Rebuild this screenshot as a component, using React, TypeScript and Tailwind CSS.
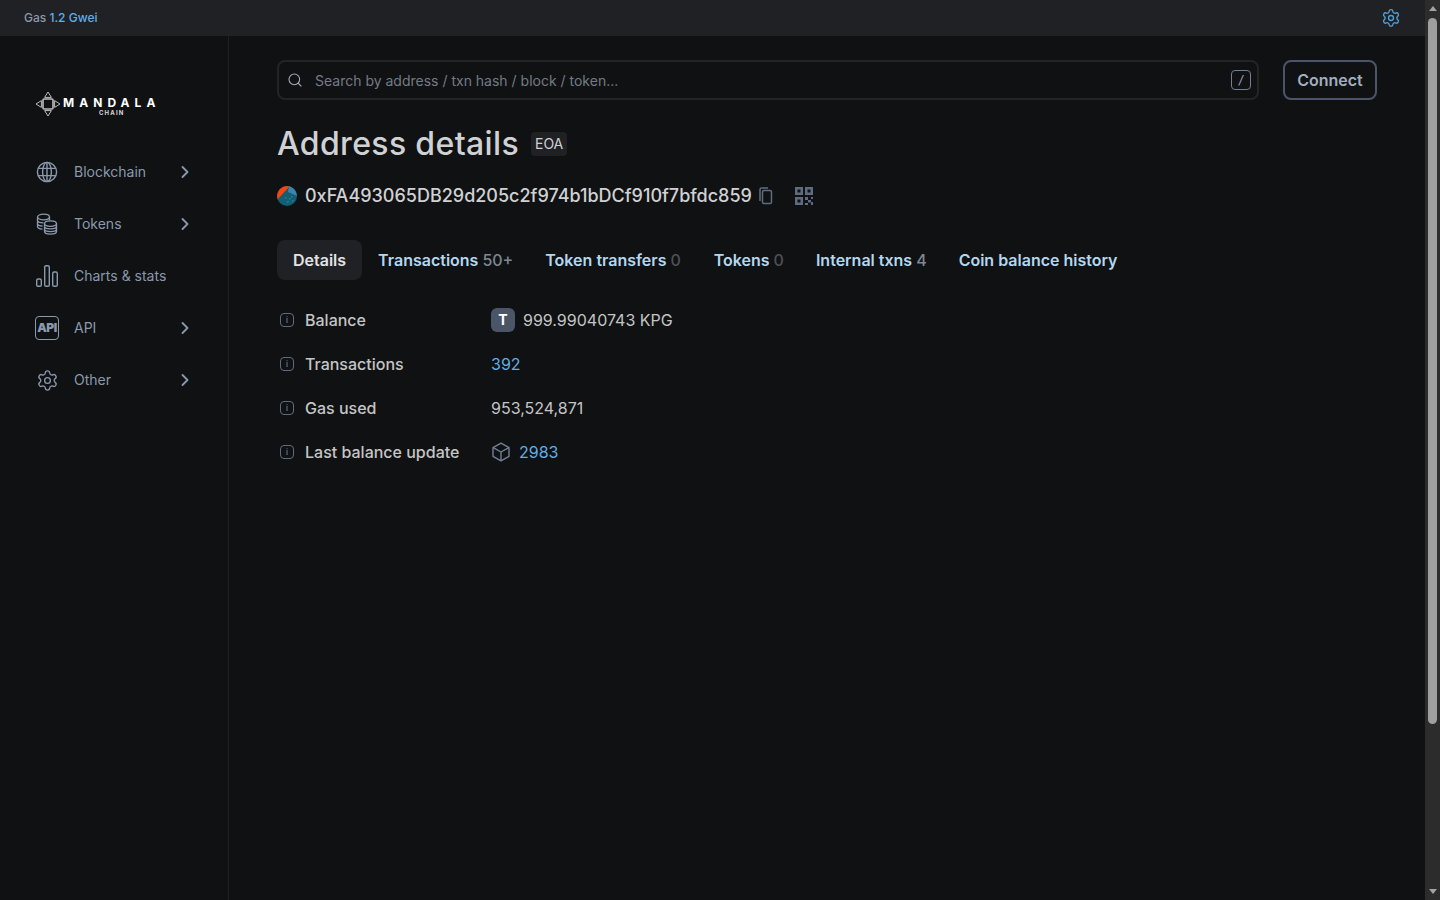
import { ChevronRight, Search, Settings } from "lucide-react";
import type { ReactNode } from "react";

function GlobeIcon() {
  return (
    <svg width="22" height="22" viewBox="0 0 22 22" fill="none" stroke="currentColor" strokeWidth="1.4">
      <circle cx="11" cy="11" r="9.6" />
      <ellipse cx="11" cy="11" rx="4.4" ry="9.6" />
      <path d="M11 1.400v19.200M2.200 7.400h17.600M2.200 14.600h17.600" />
    </svg>
  );
}

function CoinsIcon() {
  return (
    <svg width="22" height="22" viewBox="0 0 22 22" fill="none" stroke="currentColor" strokeWidth="1.3">
      <ellipse cx="7.500" cy="4" rx="6" ry="2.800" />
      <path d="M1.500 4v9.600c0 1.300 2 2.400 5 2.600M1.500 7.200c0 1.400 2.700 2.600 6 2.600M1.500 10.400c0 1.400 2 2.400 5 2.600M13.500 4v3.600" />
      <ellipse cx="14.500" cy="10.600" rx="6" ry="2.800" />
      <path d="M8.500 10.600v8c0 1.400 2.700 2.600 6 2.600s6-1.200 6-2.600v-8M8.500 13.300c0 1.400 2.700 2.600 6 2.600s6-1.200 6-2.600M8.500 16c0 1.400 2.700 2.600 6 2.600s6-1.200 6-2.600" />
    </svg>
  );
}

function ChartIcon() {
  return (
    <svg width="22" height="22" viewBox="0 0 22 22" fill="none" stroke="currentColor" strokeWidth="1.4">
      <rect x="0.7" y="14" width="4.6" height="7.3" rx="1.4" />
      <rect x="8.7" y="0.7" width="4.6" height="20.6" rx="1.4" />
      <rect x="16.7" y="7" width="4.6" height="14.3" rx="1.4" />
    </svg>
  );
}

function ApiIcon() {
  return (
    <div className="flex h-6 w-6 items-center justify-center rounded-[4px] border border-[#8a99ad] text-[12px] font-black tracking-[-0.5px] leading-none">
      API
    </div>
  );
}

function NavItem({ icon, label, arrow = true }: { icon: ReactNode; label: string; arrow?: boolean }) {
  return (
    <div className="flex h-[52px] items-center text-[#8a99ad]">
      <div className="flex w-6 justify-center">{icon}</div>
      <span className="ml-[15px] w-[99px] text-sm leading-5 whitespace-nowrap">{label}</span>
      {arrow && <ChevronRight size={20} strokeWidth={2.2} className="ml-[2px] text-[#8a99ad]" />}
    </div>
  );
}

function Logo() {
  return (
    <div className="flex items-center">
      <svg width="26" height="26" viewBox="0 0 26 26" fill="none" stroke="#bdbdbd" strokeWidth="1">
        <path d="M13 1l3.400 5.400H9.600L13 1zM13 25l3.400-5.400H9.600L13 25zM1 13l5.400-3.400v6.800L1 13zM25 13l-5.400-3.400v6.800L25 13z" />
        <rect x="8" y="8" width="10" height="10" rx="1" strokeWidth="1.600" />
      </svg>
      <div className="ml-[2px] flex flex-col items-center pt-[5px]">
        <span className="text-[12px] font-bold leading-[12px] tracking-[0.42em] whitespace-nowrap text-white">MANDALA</span>
        <span className="text-[6px] font-bold leading-[8px] tracking-[0.2em] text-[#d8d8d8]">CHAIN</span>
      </div>
    </div>
  );
}

function InfoIcon() {
  return (
    <div className="flex h-3.5 w-3.5 items-center justify-center rounded-[4px] border border-[#5f6c80] text-[8px] leading-none text-[#8a99ad]">
      i
    </div>
  );
}

function Row({ label, children }: { label: string; children: ReactNode }) {
  return (
    <div className="flex h-11 items-center">
      <div className="flex w-[18px] justify-center pl-[2px]">
        <InfoIcon />
      </div>
      <span className="ml-[10px] w-[186px] text-base font-medium whitespace-nowrap text-[#c4c5c6]">{label}</span>
      <div className="flex items-center text-base text-[#c4c5c6]">{children}</div>
    </div>
  );
}

function Tab({ label, count, dim, active, shifted }: { label: string; count?: string; dim?: boolean; active?: boolean; shifted?: boolean }) {
  return (
    <div
      className={`flex h-10 items-center rounded-lg px-4 text-base font-semibold whitespace-nowrap ${
        active ? "bg-[#202124] text-[#e3e4e5]" : "text-[#b3d7ef]"
      } ${shifted ? "ml-[1px]" : ""}`}
    >
      {label}
      {count && <span className={`ml-1 font-medium ${dim ? "text-[#4e5156]" : "text-[#7d8794]"}`}>{count}</span>}
    </div>
  );
}

function CopyIcon() {
  return (
    <svg width="14" height="18" viewBox="0 0 14 18" fill="none" stroke="#5f6c80" strokeWidth="1.5" className="ml-[7px]">
      <path d="M1 14V2.500A1.500 1.500 0 0 1 2.500 1H9" />
      <rect x="3.500" y="3.500" width="9" height="13" rx="1.500" />
    </svg>
  );
}

function QrIcon() {
  return (
    <svg width="20" height="20" viewBox="0 0 20 20" fill="none" className="ml-[21px] text-[#5f6c80]">
      <path
        fill="currentColor"
        fillRule="evenodd"
        d="M1 1h8v8H1V1zm2.500 2.500v3h3v-3h-3zM11 1h8v8h-8V1zm2.500 2.500v3h3v-3h-3zM1 11h8v8H1v-8zm2.500 2.500v3h3v-3h-3zM11 11h3v3h-3v-3zM17 11h2v2h-2v-2zM14 14h3v2.500h-3V14zM11 17h3v2h-3v-2zM17 16h2v3h-2v-3z"
      />
    </svg>
  );
}

function Avatar() {
  return (
    <div className="h-5 w-5 overflow-hidden rounded-full">
      <svg width="20" height="20" viewBox="0 0 20 20">
        <path d="M0 0h20v20H0z" fill="#125e72" />
        <path d="M12 0l-1 6 9 4V0z" fill="#3f83ad" />
        <path d="M0 14L13 0H0z" fill="#f4460d" />
        <path d="M8 11h1.500v1.500H8zM12 12h1.500v1.500H12zM15 14h1.500v1.500H15zM10 15h1.500v1.500H10zM14 10h1.500v1.500H14z" fill="#2a7f96" />
      </svg>
    </div>
  );
}

function Scrollbar() {
  return (
    <div className="flex w-[15px] shrink-0 flex-col items-center bg-[#2c2c2c]">
      <div className="mt-[6px] h-0 w-0 border-x-[4px] border-b-[5px] border-x-transparent border-b-[#a3a3a3]" />
      <div className="mt-[7px] h-[706px] w-[9px] rounded-full bg-[#9f9f9f]" />
      <div className="mt-auto mb-[6px] h-0 w-0 border-x-[4px] border-t-[5px] border-x-transparent border-t-[#a3a3a3]" />
    </div>
  );
}

export default function App() {
  return (
    <div className="flex h-[900px] w-full overflow-hidden bg-[#101112] font-['Inter',sans-serif]">
      <div className="flex min-w-0 flex-1 flex-col">
        {/* Top bar */}
        <div className="flex h-9 shrink-0 items-center justify-between bg-[#202124] px-6">
          <div className="text-xs font-medium text-[#8a99ad]">
            Gas <span className="text-[#63aee6]">1.2 Gwei</span>
          </div>
          <Settings size={20} strokeWidth={1.6} className="text-[#4f9fdc]" />
        </div>

        <div className="flex min-h-0 flex-1">
          {/* Sidebar */}
          <div className="flex w-[229px] shrink-0 flex-col border-r border-[#1f2022] pl-[35px]">
            <div className="mt-[55px] h-[25px]">
              <Logo />
            </div>
            <div className="mt-[30px] flex flex-col">
              <NavItem icon={<GlobeIcon />} label="Blockchain" />
              <NavItem icon={<CoinsIcon />} label="Tokens" />
              <NavItem icon={<ChartIcon />} label="Charts & stats" arrow={false} />
              <NavItem icon={<ApiIcon />} label="API" />
              <NavItem icon={<Settings size={23} strokeWidth={1.4} />} label="Other" />
            </div>
          </div>

          {/* Content */}
          <div className="min-w-0 flex-1 px-12 pt-6">
            <div className="flex gap-6">
              <div className="flex h-10 flex-1 items-center rounded-lg border-2 border-[#232427] pr-[6px] pl-[8px]">
                <Search size={16} strokeWidth={1.6} className="text-[#a0aec0]" />
                <span className="ml-[12px] flex-1 pt-[2px] text-sm text-[#737b87]">Search by address / txn hash / block / token...</span>
                <div className="flex h-5 w-5 items-center justify-center rounded-[4px] border border-[#718096] text-xs text-[#a0aec0] italic">
                  /
                </div>
              </div>
              <div className="flex h-10 w-[94px] items-center justify-center rounded-lg border-2 border-[#4a5568] text-base font-semibold text-[#a0aec0]">
                Connect
              </div>
            </div>

            <div className="mt-6 flex h-10 items-center">
              <h1 className="text-[32px] leading-10 font-medium tracking-[0.35px] whitespace-nowrap text-[#d0d1d2]">Address details</h1>
              <div className="ml-3 flex h-6 items-center rounded-[4px] bg-[#202124] px-1 text-sm text-[#d0d1d2]">EOA</div>
            </div>

            <div className="mt-[20px] flex h-6 items-center">
              <Avatar />
              <span className="ml-2 text-lg font-medium whitespace-nowrap text-[#d0d1d2]">
                0xFA493065DB29d205c2f974b1bDCf910f7bfdc859
              </span>
              <CopyIcon />
              <QrIcon />
            </div>

            <div className="mt-8 flex">
              <Tab label="Details" active />
              <Tab label="Transactions" count="50+" />
              <Tab label="Token transfers" count="0" dim />
              <Tab label="Tokens" count="0" dim shifted />
              <Tab label="Internal txns" count="4" />
              <Tab label="Coin balance history" />
            </div>

            <div className="mt-[18px] flex flex-col">
              <Row label="Balance">
                <div className="flex h-6 w-6 items-center justify-center rounded-md bg-[#4a5568] text-sm font-bold text-white">T</div>
                <span className="ml-2">999.99040743 KPG</span>
              </Row>
              <Row label="Transactions">
                <span className="text-[#63aee6]">392</span>
              </Row>
              <Row label="Gas used">953,524,871</Row>
              <Row label="Last balance update">
                <svg width="20" height="20" viewBox="0 0 20 20" fill="none" stroke="#718096" strokeWidth="1.4" strokeLinejoin="round">
                  <path d="M10 1.200l8 4.400v8.800l-8 4.400-8-4.400V5.600l8-4.400z" />
                  <path d="M2.200 5.700L10 10l7.800-4.300M10 10v8.800" />
                </svg>
                <span className="ml-2 text-[#63aee6]">2983</span>
              </Row>
            </div>
          </div>
        </div>
      </div>
      <Scrollbar />
    </div>
  );
}
